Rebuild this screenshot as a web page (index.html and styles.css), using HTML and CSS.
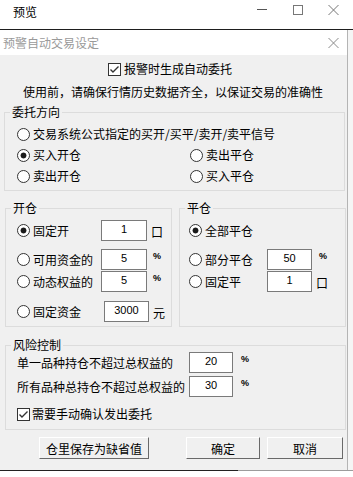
FILE: index.html
```html
<!DOCTYPE html>
<html lang="zh-CN">
<head>
    <meta charset="UTF-8">
    <meta name="viewport" content="width=device-width, initial-scale=1.0">
    <title>预览</title>
    <link rel="stylesheet" href="styles.css">
</head>
<body>
    <div class="app-bar">
        <span class="app-title">预览</span>
        <svg class="ctrl ctrl-min" width="10" height="10" viewBox="0 0 10 10"><path d="M0 4.5H10" /></svg>
        <svg class="ctrl ctrl-max" width="10" height="10" viewBox="0 0 10 10"><rect x="0.5" y="0.5" width="9" height="9" /></svg>
        <svg class="ctrl ctrl-close" width="11" height="10" viewBox="0 0 11 10"><path d="M0.5 0L10.5 10M10.5 0L0.5 10" /></svg>
    </div>

    <div class="screen">
        <div class="dialog">
            <div class="dlg-head">
                <span class="dlg-title">预警自动交易设定</span>
                <svg class="dlg-close" width="11" height="10" viewBox="0 0 11 10"><path d="M0.5 0L10.5 10M10.5 0L0.5 10" /></svg>
            </div>

            <div class="dlg-body">
                <label class="check check-main">
                    <span class="box"><svg width="11" height="11" viewBox="0 0 11 11"><path d="M1.5 5.5L4 8L9.5 2.5" /></svg></span>
                    报警时生成自动委托
                </label>
                <p class="notice">使用前，请确保行情历史数据齐全，以保证交易的准确性</p>

                <fieldset class="group group-dir">
                    <legend>委托方向</legend>
                    <div class="dir-grid">
                        <label class="radio wide"><span class="dot"></span>交易系统公式指定的买开/买平/卖开/卖平信号</label>
                        <label class="radio"><span class="dot on"></span>买入开仓</label>
                        <label class="radio"><span class="dot"></span>卖出平仓</label>
                        <label class="radio"><span class="dot"></span>卖出开仓</label>
                        <label class="radio"><span class="dot"></span>买入平仓</label>
                    </div>
                </fieldset>

                <div class="split">
                    <fieldset class="group group-open">
                        <legend>开仓</legend>
                        <div class="rows">
                            <div class="row r1">
                                <label class="radio lbl"><span class="dot on"></span>固定开</label>
                                <input class="num" type="text" value="1" readonly>
                                <span class="unit">口</span>
                            </div>
                            <div class="row r2">
                                <label class="radio lbl"><span class="dot"></span>可用资金的</label>
                                <input class="num" type="text" value="5" readonly>
                                <span class="pct">%</span>
                            </div>
                            <div class="row r3">
                                <label class="radio lbl"><span class="dot"></span>动态权益的</label>
                                <input class="num" type="text" value="5" readonly>
                                <span class="pct">%</span>
                            </div>
                            <div class="row r4">
                                <label class="radio lbl lbl-wide"><span class="dot"></span>固定资金</label>
                                <input class="num num-cash" type="text" value="3000" readonly>
                                <span class="unit">元</span>
                            </div>
                        </div>
                    </fieldset>

                    <fieldset class="group group-close">
                        <legend>平仓</legend>
                        <div class="rows">
                            <div class="row r1">
                                <label class="radio"><span class="dot on"></span>全部平仓</label>
                            </div>
                            <div class="row r2">
                                <label class="radio lbl"><span class="dot"></span>部分平仓</label>
                                <input class="num" type="text" value="50" readonly>
                                <span class="pct">%</span>
                            </div>
                            <div class="row r3">
                                <label class="radio lbl"><span class="dot"></span>固定平</label>
                                <input class="num" type="text" value="1" readonly>
                                <span class="unit">口</span>
                            </div>
                        </div>
                    </fieldset>
                </div>

                <fieldset class="group group-risk">
                    <legend>风险控制</legend>
                    <div class="rows">
                        <div class="row">
                            <span class="lbl">单一品种持仓不超过总权益的</span>
                            <input class="num" type="text" value="20" readonly>
                            <span class="pct">%</span>
                        </div>
                        <div class="row r-next">
                            <span class="lbl">所有品种总持仓不超过总权益的</span>
                            <input class="num" type="text" value="30" readonly>
                            <span class="pct">%</span>
                        </div>
                        <label class="check check-risk">
                            <span class="box"><svg width="11" height="11" viewBox="0 0 11 11"><path d="M1.5 5.5L4 8L9.5 2.5" /></svg></span>
                            需要手动确认发出委托
                        </label>
                    </div>
                </fieldset>

                <div class="actions">
                    <button class="btn btn-save">仓里保存为缺省值</button>
                    <button class="btn btn-ok">确定</button>
                    <button class="btn btn-cancel">取消</button>
                </div>
            </div>
        </div>
        <div class="edge"></div>
    </div>
    <div class="bottom-line"></div>
</body>
</html>
```

FILE: styles.css
```css
* {
    margin: 0;
    padding: 0;
    box-sizing: border-box;
}

body {
    width: 353px;
    height: 477px;
    overflow: hidden;
    background: #fff;
    color: #000;
    font-family: "Noto Sans CJK SC", "Liberation Sans", sans-serif;
    font-size: 12px;
    line-height: 14px;
}

/* outer preview window */
.app-bar {
    height: 29px;
    display: flex;
    align-items: flex-start;
    padding: 5px 0 0 13px;
    background: #fff;
}

.app-title {
    width: 24px;
    line-height: 14px;
}

.ctrl {
    fill: none;
    stroke: #555;
    stroke-width: 1;
}

.ctrl-min { margin-left: 220px; }
.ctrl-max { margin-left: 26px; stroke: #777; }
.ctrl-close { margin-left: 25px; stroke: #777; }

.screen {
    display: flex;
    border-top: 1px solid #1e1e1e;
}

.edge {
    width: 6px;
    background: #f5f5f5;
    border-left: 1px solid #b4b4b4;
}

/* dialog */
.dialog {
    width: 347px;
}

.dlg-head {
    height: 25px;
    display: flex;
    align-items: center;
    padding-left: 3px;
    background: #fff;
}

.dlg-title {
    color: #9a9a9a;
}

.dlg-close {
    margin-left: auto;
    margin-right: 8px;
    fill: none;
    stroke: #8a8a8a;
    stroke-width: 1;
}

.dlg-body {
    height: 415px;
    background: #f0f0f0;
    padding: 0 1px 0 5px;
    overflow: hidden;
}

.bottom-line {
    height: 1px;
    background: linear-gradient(to right, #222 0 238px, #9c9c9c 238px);
}

/* checkbox + radio */
.check {
    display: flex;
    align-items: center;
    height: 14px;
}

.box {
    width: 13px;
    height: 13px;
    border: 1px solid #333;
    background: #fff;
    display: flex;
    align-items: center;
    justify-content: center;
    margin-right: 3px;
}

.box svg {
    fill: none;
    stroke: #333;
    stroke-width: 1.4;
}

.check-main {
    margin-top: 7px;
    padding-left: 103px;
}

.notice {
    margin-top: 9px;
    padding-left: 18px;
    height: 14px;
}

.radio {
    display: flex;
    align-items: center;
    height: 20px;
    white-space: nowrap;
}

.dot {
    width: 13px;
    height: 13px;
    border-radius: 50%;
    border: 1px solid #333;
    background: #fff;
    margin-right: 3px;
    flex-shrink: 0;
}

.dot.on {
    background: radial-gradient(circle, #1a1a1a 0 2.6px, #fff 3.3px);
}

/* group boxes */
.group {
    border: 1px solid #dcdcdc;
    padding: 0;
    margin: 0;
    min-width: 0;
}

.group legend {
    margin-left: 5px;
    padding: 0 2px;
    line-height: 14px;
}

.group-dir {
    margin: 6px 1px 0 -1px;
}

.dir-grid {
    display: grid;
    grid-template-columns: 173px 1fr;
    row-gap: 1px;
    padding: 5px 0 4px 12px;
}

.dir-grid .wide {
    grid-column: span 2;
}

.split {
    display: flex;
    gap: 7px;
    margin-top: 10px;
}

.group-open,
.group-close {
    width: 167px;
}

.rows {
    display: flex;
    flex-direction: column;
}

.row {
    display: flex;
    align-items: center;
    height: 21px;
}

.group-open .rows {
    padding: 5px 0 4px 11px;
}

.group-close .rows {
    padding: 5px 0 4px 9px;
}

.r2 { margin-top: 8px; }
.r3 { margin-top: 1px; }
.r4 { margin-top: 9px; }

.group-open .lbl { width: 84px; }
.group-open .lbl-wide { width: 87px; }
.group-close .lbl { width: 78px; }

.num {
    width: 46px;
    height: 21px;
    border: 1px solid #7a7a7a;
    background: #fff;
    font-family: "Liberation Sans", sans-serif;
    font-size: 11px;
    color: #000;
    text-align: center;
    padding: 0 0 3px 0;
    outline: none;
}

.num-cash {
    width: 45px;
}

.group-close .num {
    width: 45px;
}

.unit {
    margin-left: 4px;
    margin-top: 3px;
}

.pct {
    align-self: flex-start;
    margin: 3px 0 0 6px;
    font-family: "Liberation Sans", sans-serif;
    font-size: 9px;
    line-height: 9px;
    font-weight: bold;
}

.group-close .pct {
    margin-left: 7px;
}

.group-risk {
    margin-top: 11px;
}

.group-risk .rows {
    padding: 0 0 8px 11px;
}

.group-risk .lbl {
    width: 172px;
    white-space: nowrap;
}

.group-risk .num {
    width: 44px;
}

.group-risk .pct {
    margin-left: 8px;
}

.r-next {
    margin-top: 3px;
}

.check-risk {
    margin-top: 10px;
}

.check-risk .box {
    margin-right: 2px;
}

/* buttons */
.actions {
    display: flex;
    margin: 7px 0 0 34px;
}

.btn {
    height: 22px;
    background: #f0f0f0;
    border: 1px solid;
    border-color: #fff #696969 #696969 #fff;
    font-family: "Noto Sans CJK SC", sans-serif;
    font-size: 12px;
    color: #000;
}

.btn-save { width: 110px; }
.btn-ok { width: 74px; margin-left: 37px; }
.btn-cancel { width: 76px; margin-left: 7px; }
```
